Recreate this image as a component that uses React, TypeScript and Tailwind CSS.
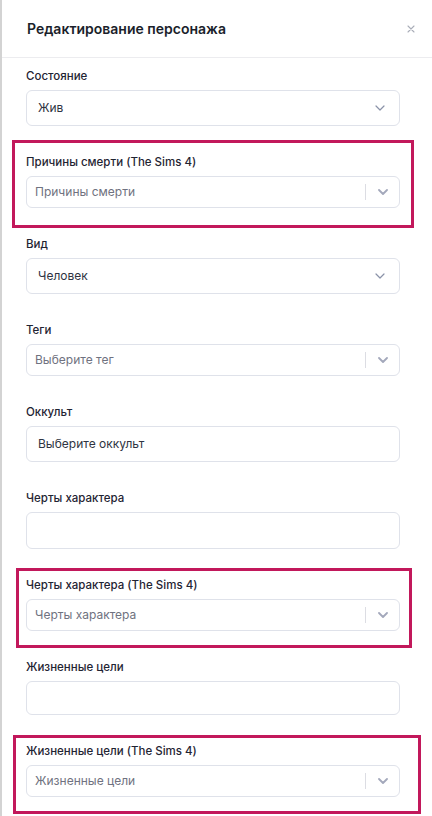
import { type ReactNode } from "react";

const font = { fontFamily: "Inter, 'Noto Sans', sans-serif" };

function Chevron({ bold }: { bold?: boolean }) {
  return (
    <svg width="10" height="6" viewBox="0 0 10 6" fill="none">
      <path
        d="M1 1l4 4 4-4"
        stroke={bold ? "#a3a8bb" : "#8a92a8"}
        strokeWidth={bold ? 1.8 : 1.2}
        strokeLinecap="round"
        strokeLinejoin="round"
      />
    </svg>
  );
}

function Label({ children }: { children: ReactNode }) {
  return <div className="mb-1 h-5 text-[11.5px] leading-5 font-medium text-[#1f2433]">{children}</div>;
}

function NativeSelect({ value }: { value: string }) {
  return (
    <div className="flex h-9 items-center justify-between rounded-md border border-[#dfe2ea] bg-white pr-[14px] pl-[11px] text-[12px] text-[#2f3442]">
      <span>{value}</span>
      <Chevron />
    </div>
  );
}

function ReactSelect({ placeholder }: { placeholder: string }) {
  return (
    <div className="flex h-8 items-center rounded-md border border-[#dfe2ea] bg-white pl-[8px] text-[12px] text-[#6f7280]">
      <span className="flex-1">{placeholder}</span>
      <span className="h-4 w-px bg-[#dcdde3]" />
      <span className="flex w-[33px] items-center justify-center">
        <Chevron bold />
      </span>
    </div>
  );
}

function TextInput({ value, h = "h-9" }: { value?: string; h?: string }) {
  return (
    <div className={`flex ${h} items-center rounded-md border border-[#dfe2ea] bg-white px-[11px] text-[12px] text-[#2f3442]`}>
      {value}
    </div>
  );
}

function Field({ label, children }: { label: string; children: ReactNode }) {
  return (
    <div>
      <Label>{label}</Label>
      {children}
    </div>
  );
}

export default function App() {
  return (
    <div className="h-[816px] overflow-hidden border-l-2 border-[#d3d3d3] bg-white" style={font}>
      <div className="flex h-[58px] items-center justify-between border-b border-[#ececef] pr-[17px] pl-[25px]">
        <h1 className="text-[14px] font-semibold text-[#1b1f2b]">Редактирование персонажа</h1>
        <svg width="8" height="8" viewBox="0 0 8 8" fill="none">
          <path d="M1 1l6 6M7 1L1 7" stroke="#a9adb8" strokeWidth="1.1" strokeLinecap="round" />
        </svg>
      </div>

      <div className="flex flex-col gap-[26px] pt-[8px] pr-[32px] pl-[24px]">
        <Field label="Состояние">
          <NativeSelect value="Жив" />
        </Field>

        <div className="-mx-[14px] -mt-[12px] -mb-[20px] border-[3px] border-[#c2185b] px-[11px] pt-[9px] pb-[17px]">
          <Field label="Причины смерти (The Sims 4)">
            <ReactSelect placeholder="Причины смерти" />
          </Field>
        </div>

        <Field label="Вид">
          <NativeSelect value="Человек" />
        </Field>

        <Field label="Теги">
          <ReactSelect placeholder="Выберите тег" />
        </Field>

        <Field label="Оккульт">
          <TextInput value="Выберите оккульт" />
        </Field>

        <Field label="Черты характера">
          <TextInput h="h-[37px]" />
        </Field>

        <div className="-mt-[7px] -mr-[12px] -mb-[17px] -ml-[10px] border-[3px] border-[#c2185b] pt-[4px] pr-[9px] pb-[14px] pl-[7px]">
          <Field label="Черты характера (The Sims 4)">
            <ReactSelect placeholder="Черты характера" />
          </Field>
        </div>

        <Field label="Жизненные цели">
          <TextInput h="h-[34px]" />
        </Field>

        <div className="-mt-[6px] -mr-[21px] -mb-[17px] -ml-[13px] border-[3px] border-[#c2185b] pt-[3px] pr-[18px] pb-[14px] pl-[10px]">
          <Field label="Жизненные цели (The Sims 4)">
            <ReactSelect placeholder="Жизненные цели" />
          </Field>
        </div>
      </div>
    </div>
  );
}
